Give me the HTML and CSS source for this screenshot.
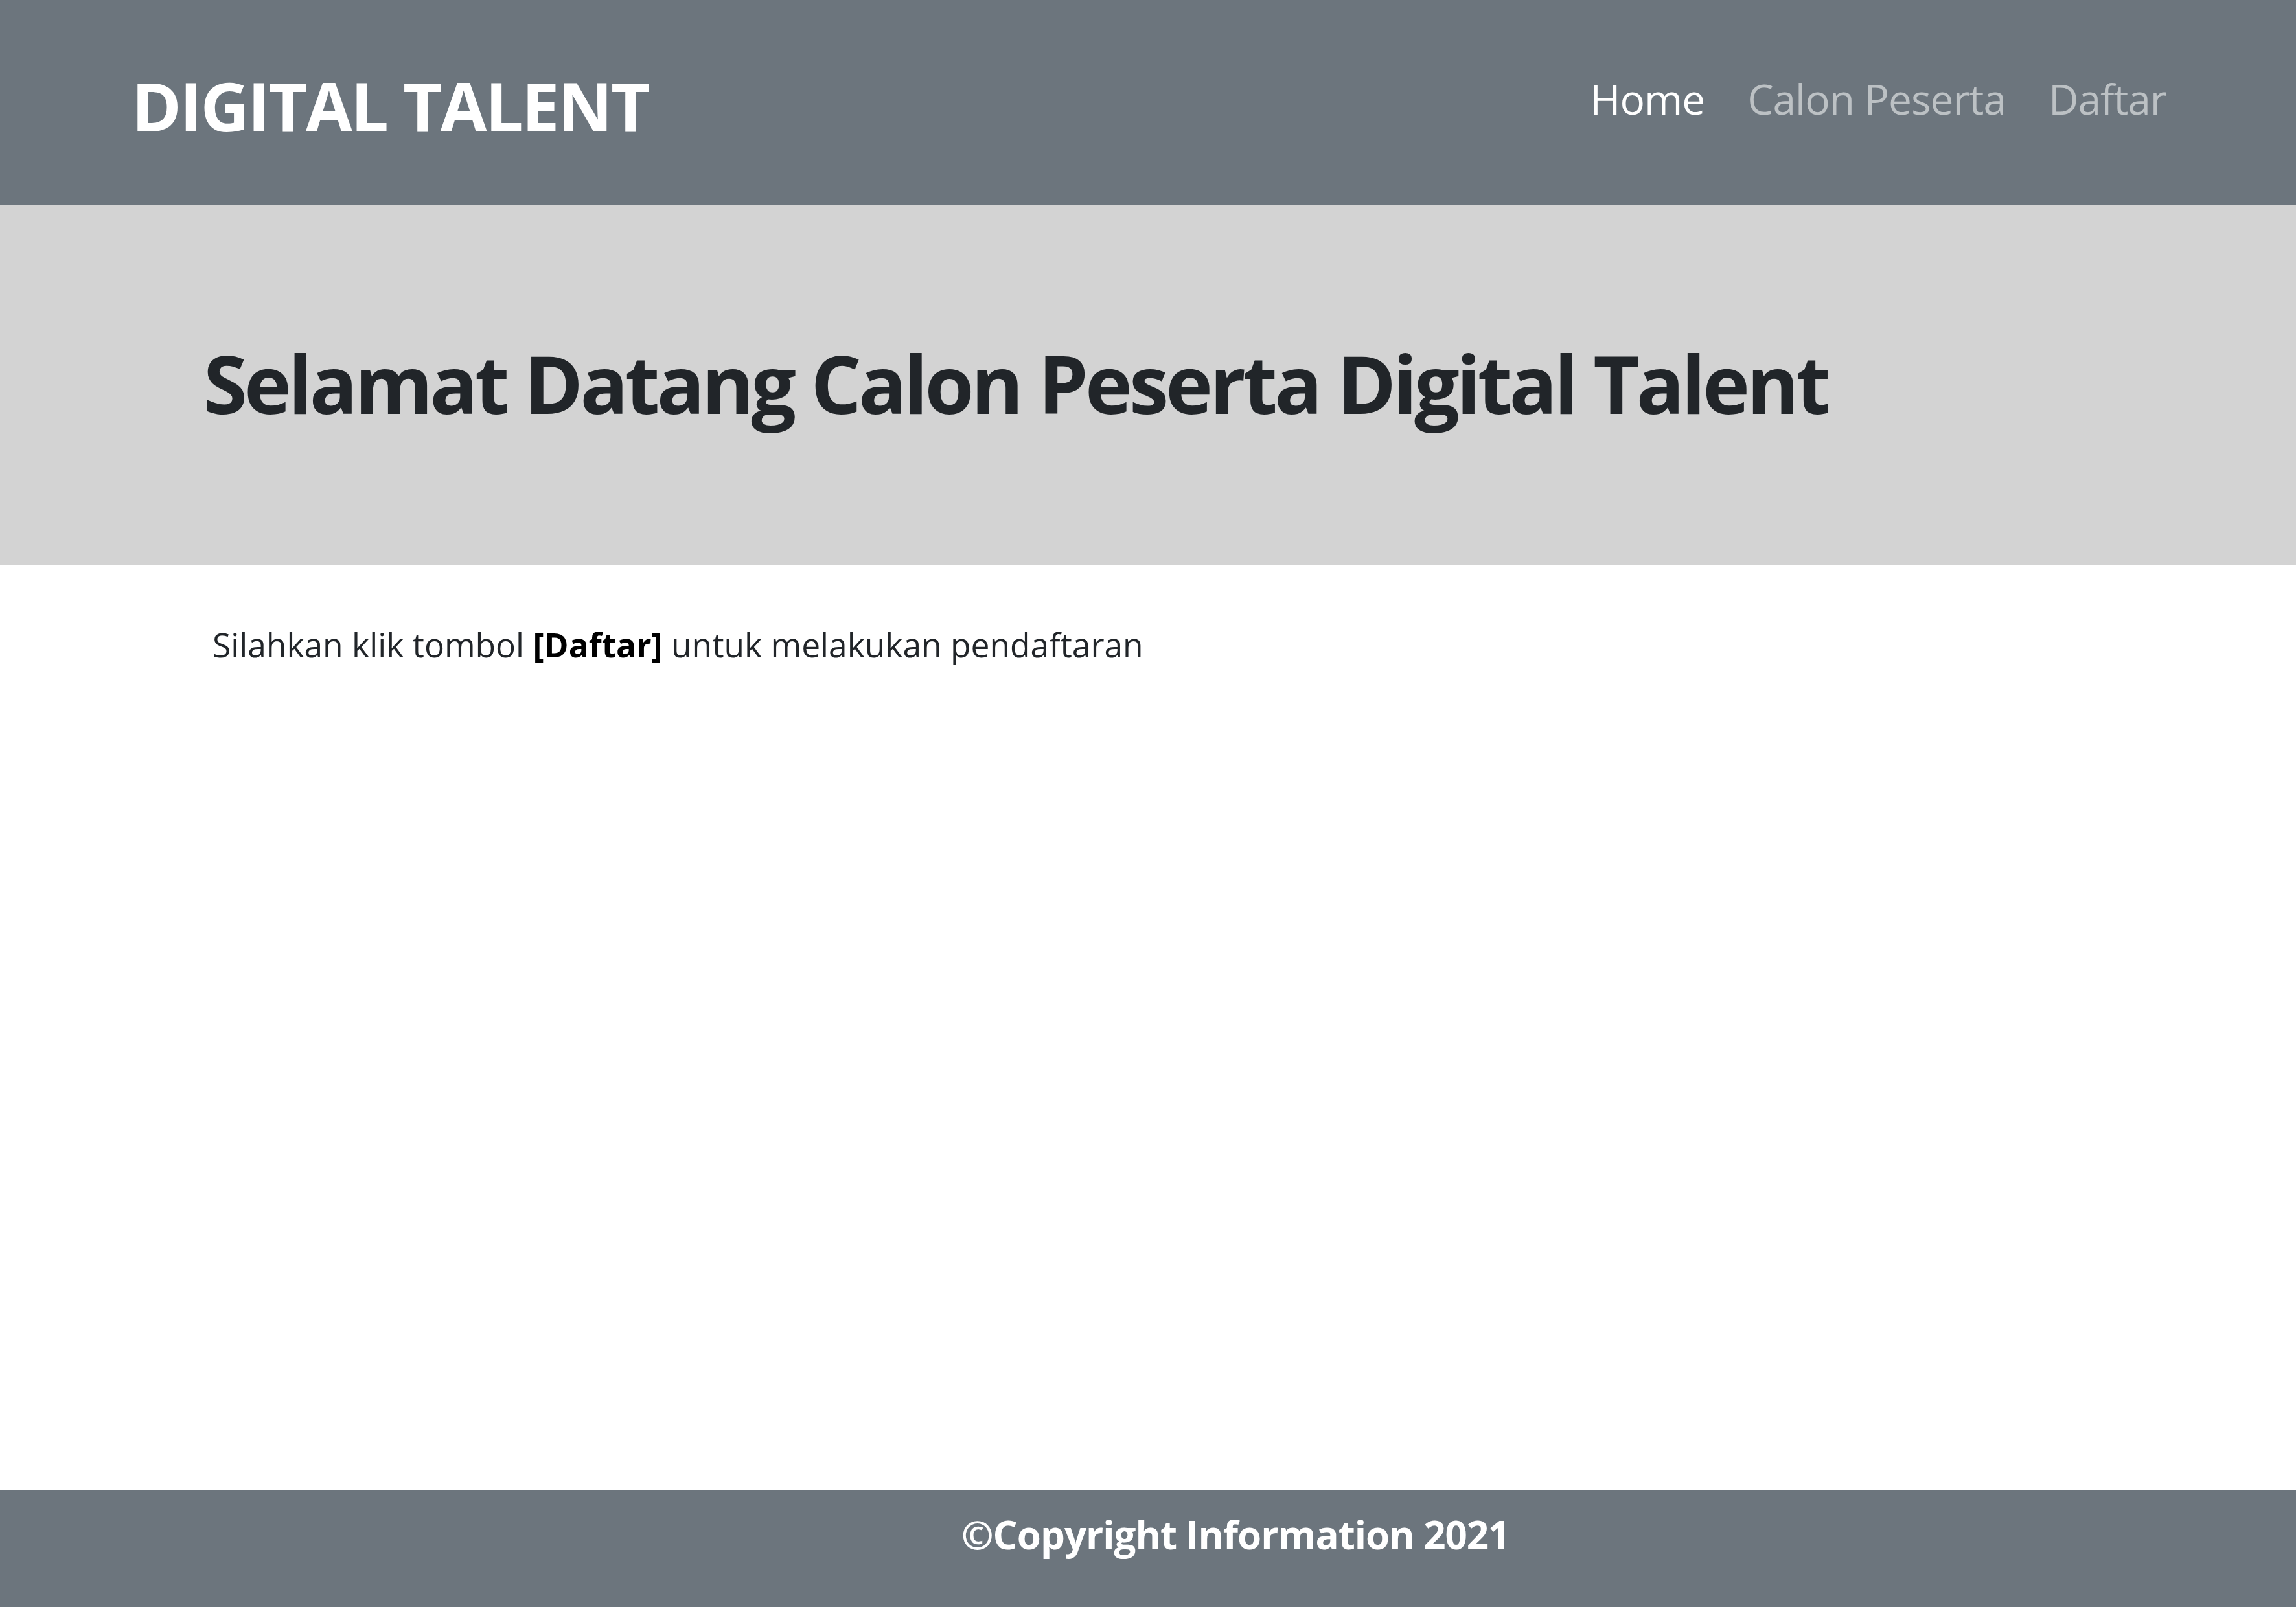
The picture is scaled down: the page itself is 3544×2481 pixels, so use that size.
FILE: index.html
```html
<!DOCTYPE html>
<html lang="id">
<head>
<meta charset="utf-8">
<title>Digital Talent</title>
<link rel="stylesheet" href="styles.css">
</head>
<body>
<div class="page">
  <nav class="navbar">
    <a class="brand" href="#">DIGITAL TALENT</a>
    <ul class="nav-links">
      <li><a class="nav-link active" href="#">Home</a></li>
      <li><a class="nav-link" href="#">Calon Peserta</a></li>
      <li><a class="nav-link" href="#">Daftar</a></li>
    </ul>
  </nav>
  <header class="hero">
    <h1 class="hero-title">Selamat Datang Calon Peserta Digital Talent</h1>
  </header>
  <main class="content">
    <p class="intro">Silahkan klik tombol <b>[Daftar]</b> untuk melakukan pendaftaran</p>
  </main>
  <footer class="footer">
    <p class="footer-text">&copy;Copyright Information 2021</p>
  </footer>
</div>
</body>
</html>
```

FILE: styles.css
```css
html, body {
  margin: 0;
  padding: 0;
}

body {
  font-family: "Open Sans", "Noto Sans", sans-serif;
  color: #212529;
  background: #ffffff;
}

.page {
  display: flex;
  flex-direction: column;
  min-height: 2481px;
}

.navbar {
  box-sizing: border-box;
  height: 316px;
  background: #6c757d;
  display: flex;
  align-items: flex-start;
  justify-content: space-between;
  padding: 0 200px 0 203px;
}

.brand {
  margin-top: 111px;
  font-size: 104px;
  line-height: 1;
  font-weight: 700;
  color: #ffffff;
  text-decoration: none;
  letter-spacing: -2.5px;
}

.nav-links {
  list-style: none;
  margin: 121px 0 0 0;
  padding: 0;
  display: flex;
  gap: 66px;
}

.nav-link {
  font-size: 64px;
  line-height: 1;
  color: rgba(255, 255, 255, 0.55);
  text-decoration: none;
  letter-spacing: -1px;
}

.nav-link.active {
  color: #ffffff;
}

.hero {
  box-sizing: border-box;
  height: 556px;
  background: #d3d3d3;
  padding: 214px 0 0 314px;
}

.hero-title {
  margin: 0;
  font-size: 123px;
  line-height: 1;
  font-weight: 700;
  color: #212529;
  letter-spacing: -4.7px;
}

.content {
  flex: 1;
  padding: 98px 0 0 328px;
}

.intro {
  margin: 0;
  font-size: 51.5px;
  line-height: 1;
  color: #212529;
}

.intro b {
  color: #000000;
}

.footer {
  box-sizing: border-box;
  height: 180px;
  background: #6c757d;
  padding: 38px 0 0 270px;
}

.footer-text {
  margin: 0;
  text-align: center;
  font-size: 60px;
  line-height: 1;
  font-weight: 700;
  color: #ffffff;
  letter-spacing: -1px;
}
```
